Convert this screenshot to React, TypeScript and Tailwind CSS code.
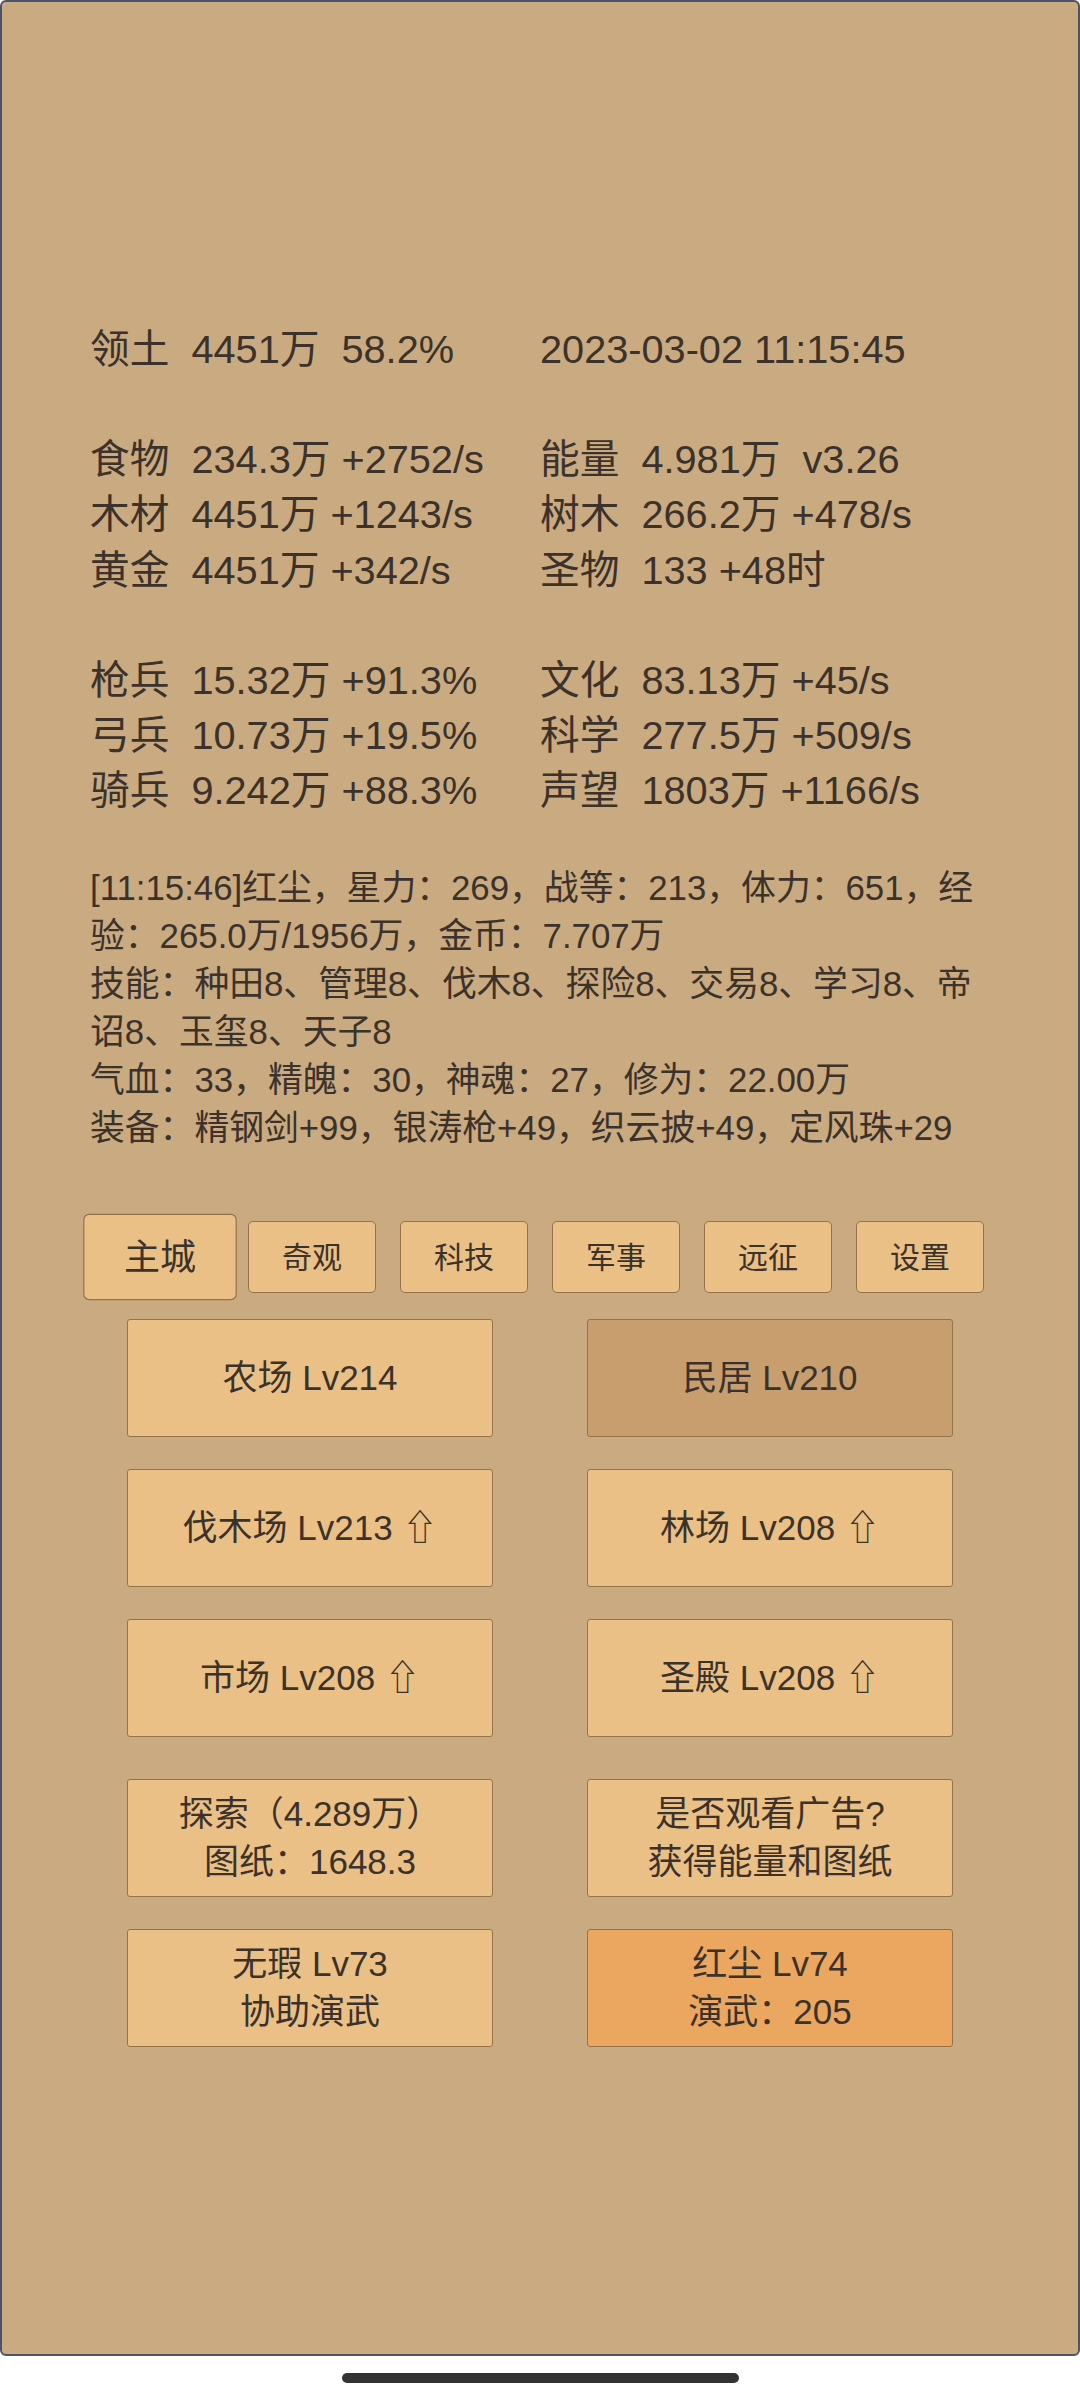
import React from 'react';

// 资源行：左列 / 右列，空字符串表示空行
const statRows: [string, string][] = [
    ['领土  4451万  58.2%', '2023-03-02 11:15:45'],
    ['', ''],
    ['食物  234.3万 +2752/s', '能量  4.981万  v3.26'],
    ['木材  4451万 +1243/s', '树木  266.2万 +478/s'],
    ['黄金  4451万 +342/s', '圣物  133 +48时'],
    ['', ''],
    ['枪兵  15.32万 +91.3%', '文化  83.13万 +45/s'],
    ['弓兵  10.73万 +19.5%', '科学  277.5万 +509/s'],
    ['骑兵  9.242万 +88.3%', '声望  1803万 +1166/s'],
];

const logLines = [
    '[11:15:46]红尘，星力：269，战等：213，体力：651，经验：265.0万/1956万，金币：7.707万',
    '技能：种田8、管理8、伐木8、探险8、交易8、学习8、帝诏8、玉玺8、天子8',
    '气血：33，精魄：30，神魂：27，修为：22.00万',
    '装备：精钢剑+99，银涛枪+49，织云披+49，定风珠+29',
];

const tabs = ['主城', '奇观', '科技', '军事', '远征', '设置'];

interface BuildingButton {
    lines: string[];
    tone?: 'normal' | 'dark' | 'orange';
}

const buildingRows: BuildingButton[][] = [
    [{ lines: ['农场 Lv214'] }, { lines: ['民居 Lv210'], tone: 'dark' }],
    [{ lines: ['伐木场 Lv213 ⇧'] }, { lines: ['林场 Lv208 ⇧'] }],
    [{ lines: ['市场 Lv208 ⇧'] }, { lines: ['圣殿 Lv208 ⇧'] }],
];

const actionRows: BuildingButton[][] = [
    [{ lines: ['探索（4.289万）', '图纸：1648.3'] }, { lines: ['是否观看广告?', '获得能量和图纸'] }],
    [{ lines: ['无瑕 Lv73', '协助演武'] }, { lines: ['红尘 Lv74', '演武：205'], tone: 'orange' }],
];

function GameButton({ btn }: { btn: BuildingButton }) {
    const bg =
        btn.tone === 'dark' ? 'bg-[#c89e6e]' : btn.tone === 'orange' ? 'bg-[#eba65f]' : 'bg-[#eac086]';
    return (
        <div
            className={`w-[366px] h-[118px] ${bg} border border-[#94724c] rounded-[3px] flex flex-col items-center justify-center text-[35px] leading-[48px]`}
        >
            {btn.lines.map((line, i) => (
                <div key={i} className="whitespace-pre">
                    {line}
                </div>
            ))}
        </div>
    );
}

export default function App() {
    return (
        <div
            className="w-[1080px] h-[2400px] bg-white flex flex-col text-[#3a322b]"
            style={{ fontFamily: '"Liberation Sans", "Noto Sans CJK SC", "DejaVu Sans", sans-serif' }}
        >
            <div className="h-[2356px] bg-[#caaa81] border-2 border-[#4f5369] rounded-[6px] flex flex-col">
                {/* 资源统计 */}
                <div className="pt-[320px] px-[88px] text-[39.7px] leading-[55.16px]">
                    {statRows.map(([left, right], i) => (
                        <div key={i} className="grid grid-cols-2 h-[55.16px]">
                            <div className="whitespace-pre">{left}</div>
                            <div className="whitespace-pre">{right}</div>
                        </div>
                    ))}
                </div>

                {/* 日志 */}
                <div className="mt-[46px] px-[88px] w-[1076px]">
                    <div className="w-[900px] text-[34.8px] leading-[48px]">
                        {logLines.map((line, i) => (
                            <div key={i}>{line}</div>
                        ))}
                    </div>
                </div>

                {/* 标签页 */}
                <div className="mt-[69px] flex justify-center items-center gap-[24px]">
                    {tabs.map((tab, i) => (
                        <div
                            key={tab}
                            className={`w-[128px] h-[72px] bg-[#eac086] border border-[#94724c] rounded-[5px] flex items-center justify-center text-[30px] ${i === 0 ? 'scale-[1.2]' : ''}`}
                        >
                            {tab}
                        </div>
                    ))}
                </div>

                {/* 建筑 */}
                <div className="mt-[26px] flex flex-col gap-[32px]">
                    {buildingRows.map((row, i) => (
                        <div key={i} className="flex justify-center gap-[94px]">
                            {row.map((btn, j) => (
                                <GameButton key={j} btn={btn} />
                            ))}
                        </div>
                    ))}
                </div>

                <div className="mt-[42px] flex flex-col gap-[32px]">
                    {actionRows.map((row, i) => (
                        <div key={i} className="flex justify-center gap-[94px]">
                            {row.map((btn, j) => (
                                <GameButton key={j} btn={btn} />
                            ))}
                        </div>
                    ))}
                </div>
            </div>

            {/* 底部手势条 */}
            <div className="flex justify-center pt-[17px]">
                <div className="w-[397px] h-[10px] rounded-full bg-[#333333]" />
            </div>
        </div>
    );
}
